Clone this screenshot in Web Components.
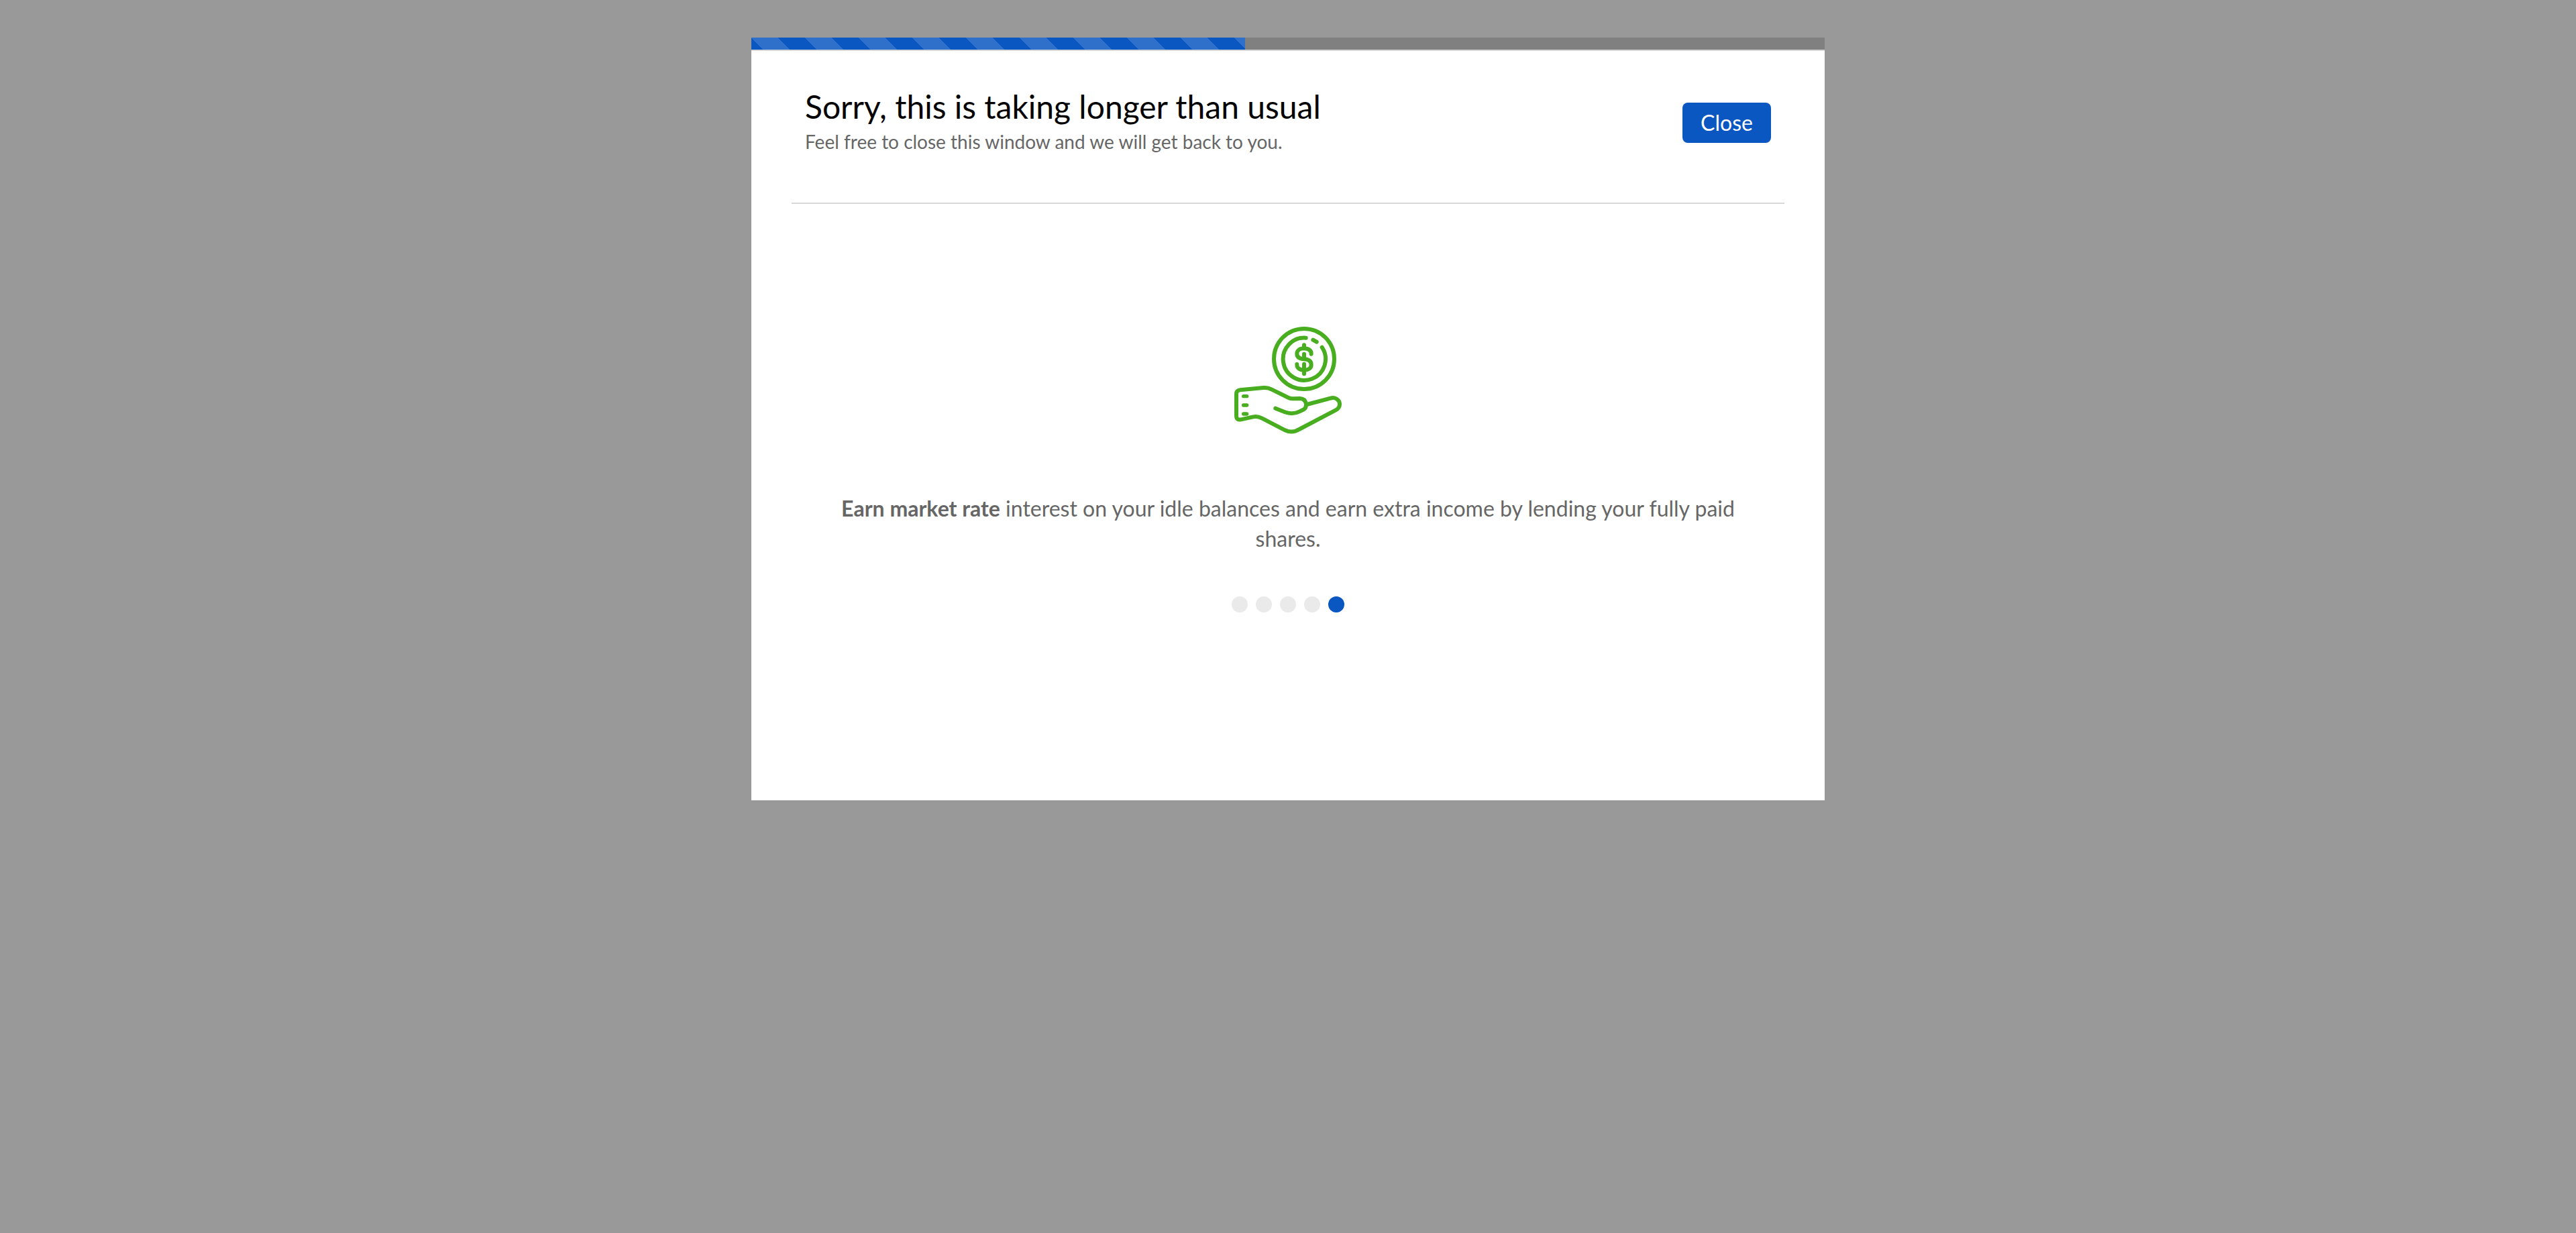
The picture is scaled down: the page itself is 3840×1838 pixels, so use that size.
<!DOCTYPE html>
<html lang="en">
<head>
<meta charset="utf-8">
<title>Please wait</title>
<style>
  body {
    margin: 0;
    min-height: 100vh;
    background: #999;
    color: #666;
    font-family: Lato, "Open Sans", sans-serif;
  }
</style>
</head>
<body>
<wait-dialog>
  <striped-progress slot="progress" value="46"></striped-progress>
  <dialog-header slot="header">
    <span slot="title">Sorry, this is taking longer than usual</span>
    <span slot="subtitle">Feel free to close this window and we will get back to you.</span>
    <action-button slot="action">Close</action-button>
  </dialog-header>
  <promo-slide>
    <hand-coin-icon slot="icon"></hand-coin-icon>
    <b>Earn market rate</b> interest on your idle balances and earn extra income by lending your fully paid shares.
  </promo-slide>
  <slide-dots count="5" current="5"></slide-dots>
</wait-dialog>

<script>
  class BaseElement extends HTMLElement {
    connectedCallback() {
      if (this.shadowRoot) return;
      this.attachShadow({ mode: "open" }).innerHTML = this.render();
    }
  }

  customElements.define("wait-dialog", class extends BaseElement {
    render() {
      return `
        <style>
          :host { display: block; padding: 56px 24px; }
          section { max-width: 1600px; margin: 0 auto; background: #fff; }
          .content { padding: 0 60px 280px; }
        </style>
        <section role="dialog" aria-label="Please wait">
          <slot name="progress"></slot>
          <div class="content"><slot name="header"></slot><slot></slot></div>
        </section>`;
    }
  });

  customElements.define("striped-progress", class extends BaseElement {
    render() {
      const value = Number(this.getAttribute("value"));
      return `
        <style>
          :host { display: block; background: gray; border-bottom: 2px solid #d8d8d8; }
          div {
            width: ${value}%;
            height: 18px;
            background: #0b57c1 linear-gradient(45deg,
              rgba(255,255,255,.15) 25%, transparent 25%, transparent 50%,
              rgba(255,255,255,.15) 50%, rgba(255,255,255,.15) 75%, transparent 75%) 0 0 / 80px 80px;
          }
        </style>
        <div role="progressbar" aria-valuemin="0" aria-valuemax="100" aria-valuenow="${value}"></div>`;
    }
  });

  customElements.define("dialog-header", class extends BaseElement {
    render() {
      return `
        <style>
          :host { display: block; }
          header {
            display: flex;
            align-items: center;
            justify-content: space-between;
            gap: 40px;
            padding: 53px 20px 65px;
            border-bottom: 2px solid #d8d8d8;
          }
          .text { padding-bottom: 4px; }
          h1, p { margin: 0; font-weight: 400; }
          h1 { font-size: 48px; line-height: 60px; color: #000; }
          p { font-size: 28px; line-height: 44px; }
        </style>
        <header>
          <div class="text">
            <h1><slot name="title"></slot></h1>
            <p><slot name="subtitle"></slot></p>
          </div>
          <slot name="action"></slot>
        </header>`;
    }
  });

  customElements.define("action-button", class extends BaseElement {
    render() {
      return `
        <style>
          :host { display: block; }
          button {
            display: block;
            min-width: 132px;
            height: 60px;
            padding: 0 24px;
            border: 0;
            border-radius: 8px;
            background: #0b57c1;
            color: #fff;
            font: 32px/60px Lato, "Open Sans", sans-serif;
            cursor: pointer;
          }
        </style>
        <button type="button"><slot></slot></button>`;
    }
  });

  customElements.define("promo-slide", class extends BaseElement {
    render() {
      return `
        <style>
          :host { display: block; padding: 183px 60px 64px; text-align: center; }
          p { margin: 88px 0 0; font-size: 32px; line-height: 45px; }
          ::slotted(b) { font-weight: 700; }
        </style>
        <slot name="icon"></slot>
        <p><slot></slot></p>`;
    }
  });

  customElements.define("hand-coin-icon", class extends BaseElement {
    render() {
      return `
        <style>
          :host { display: block; }
          svg { display: block; margin: 0 auto; width: 160px; height: 160px; }
        </style>
        <svg viewBox="60 51 480 480" fill="none" stroke="#48ae20" stroke-width="18"
             stroke-linecap="round" stroke-linejoin="round" aria-hidden="true">
          <circle cx="372" cy="195" r="135"/>
          <path d="M380 101A95 95 0 1 0 452 143"/>
          <path d="M412 110L428 119"/>
          <path d="M404 173C405 157 391 148 372 148C352 148 340 158 340 172C340 188 353 195 372 196C392 197 404 205 404 221C404 237 391 245 372 245C352 245 339 236 340 219"/>
          <path d="M372 133V148M372 173V196M372 218V262"/>
          <path d="M101 362H116M101 402H116M101 441H116" stroke-width="16"/>
          <path d="M244 416L286 433Q320 446 352 430L371 421Q382 414 381 397Q377 372 352 372L320 373Q312 373 303 369L226 331Q210 322 190 324L87 334Q69 336 69 352V449Q69 470 90 466L144 454Q164 450 183 460L287 514Q319 529 350 510L512 425Q531 415 531 399C532 380 513 364 490 371L384 399"/>
        </svg>`;
    }
  });

  customElements.define("slide-dots", class extends BaseElement {
    render() {
      const count = Number(this.getAttribute("count"));
      const current = Number(this.getAttribute("current"));
      const dots = Array.from({ length: count }, (_, i) =>
        `<button type="button" aria-label="Slide ${i + 1}"${i + 1 === current ? ' aria-current="true"' : ""}></button>`).join("");
      return `
        <style>
          :host { display: flex; justify-content: center; gap: 12px; }
          button { width: 24px; height: 24px; padding: 0; border: 0; border-radius: 50%; background: #eaeaea; }
          button[aria-current] { background: #0b57c1; }
        </style>${dots}`;
    }
  });
</script>
</body>
</html>
